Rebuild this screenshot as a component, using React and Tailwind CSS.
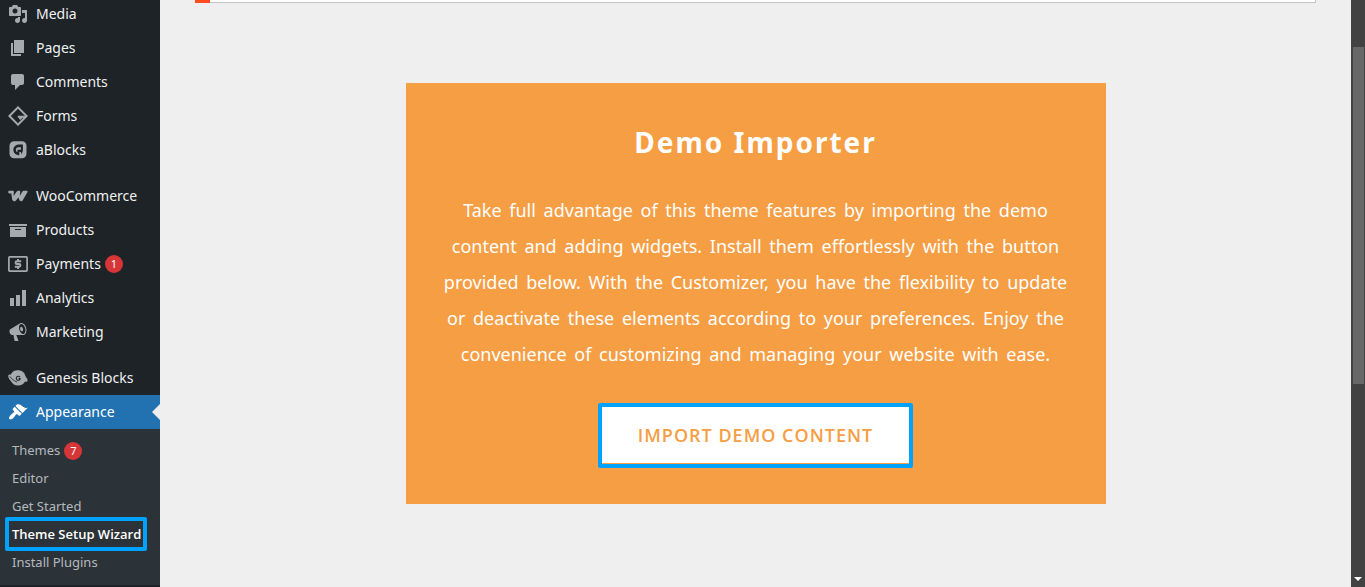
const icons = {
  media: (
    <path d="M13 11V4c0-.55-.45-1-1-1h-1.670L9 1H5L3.670 3H2c-.55 0-1 .45-1 1v7c0 .55.45 1 1 1h10c.55 0 1-.45 1-1zM7 4.500c1.380 0 2.500 1.120 2.500 2.500S8.380 9.500 7 9.500 4.500 8.380 4.500 7 5.620 4.500 7 4.500zM14 6h5v10.500c0 1.380-1.120 2.500-2.500 2.500S14 17.880 14 16.500s1.120-2.500 2.500-2.500c.17 0 .34.020.5.050V9h-3V6zm-4 8.050V13h2v3.500c0 1.380-1.120 2.500-2.500 2.500S7 17.880 7 16.500 8.120 14 9.500 14c.17 0 .34.020.5.050z" />
  ),
  pages: <path d="M6 15V2h10v13H6zm-1 1h8v2H3V5h2v11z" />,
  comments: <path d="M5 2h9c1.100 0 2 .9 2 2v7c0 1.100-.9 2-2 2h-2l-5 5v-5H5c-1.100 0-2-.9-2-2V4c0-1.100.9-2 2-2z" />,
  forms: (
    <>
      <path fill="none" stroke="currentColor" strokeWidth="2" d="M10 1.400l8.600 8.600-8.600 8.600L1.400 10z" />
      <path d="M9.800 9.700h8v2h-3.200l-2.300 2.300-1.500-1.500.8-.8H9.800z" />
    </>
  ),
  ablocks: (
    <>
      <path d="M6 1.200h8a4.500 4.500 0 0 1 4.500 4.500v8.100a4.500 4.500 0 0 1-4.500 4.500H6a4.500 4.500 0 0 1-4.500-4.500V5.700A4.500 4.500 0 0 1 6 1.200z" />
      <path
        className="text-[#1d2327]"
        fill="currentColor"
        fillRule="evenodd"
        d="M10 4.600h4.900v5.600a5 5 0 0 1-1.900 4v-2.300h-1.700v3.300A5.300 5.300 0 1 1 10 4.600zM10.300 7.300a2.600 2.600 0 0 0-.9 5V9.700h3.500V7.300z"
      />
    </>
  ),
  woo: (
    <path d="M1.600 4.800h3.200c.8 0 1.200.5 1.100 1.300L5.500 10l3.300-4.500c.4-.5.800-.7 1.400-.7h1.100c.7 0 1 .4.900 1.100L11.700 10l2.500-4.300c.4-.6.900-.9 1.600-.9h2.700c1 0 1.400.7.900 1.500l-4.500 7.700c-.4.800-1 1.200-1.700 1.200-1 0-1.600-.7-2-1.700l-.9-1.900-1.900 2.300c-.7.900-1.200 1.300-2.100 1.300-1.300 0-2-.8-2.200-2.100L3.300 7.400H1.600C.7 7.400.2 6.900.2 6.100s.5-1.300 1.400-1.300z" />
  ),
  products: <path d="M19 4v2H1V4h18zM2 7h16v10H2V7zm11 3V9H7v1h6z" />,
  payments: (
    <g fill="none" stroke="currentColor">
      <rect x="0.900" y="2.900" width="18.200" height="14.200" rx="0.800" strokeWidth="1.700" />
      <path strokeWidth="1.900" d="M13.200 7.300H8.900a1.350 1.350 0 0 0 0 2.700h2.200a1.350 1.350 0 0 1 0 2.700H6.800M10 4.900v2.400M10 12.700v2.400" />
    </g>
  ),
  analytics: <path d="M18 18V2h-4v16h4zm-6 0V7H8v11h4zm-6 0v-8H2v8h4z" />,
  marketing: (
    <path d="M18.150 5.940c.46 1.620.38 3.220-.02 4.480-.42 1.280-1.260 2.180-2.300 2.480-.16.060-.26.060-.4.060-.06.020-.12.020-.18.020-.06.020-.14.020-.22.020h-6.800l2.220 5.500c.02.140-.06.260-.14.340-.08.100-.24.160-.34.160H6.950c-.1 0-.26-.06-.34-.16-.08-.08-.16-.2-.14-.34l-1-5.500H4.250l-.02-.02c-.5.060-1.080-.18-1.540-.62s-.88-1.080-1.060-1.880c-.24-.8-.2-1.560-.02-2.200.18-.62.580-1.080 1.060-1.300l.02-.02 9-5.400c.1-.06.18-.1.240-.16.060-.04.140-.08.240-.12.160-.08.280-.12.5-.18 1.040-.3 2.240.1 3.220.98s1.840 2.240 2.260 3.860zm-2.580 5.980h-.02c.4-.1.740-.34 1.040-.7.580-.7.860-1.760.86-3.040 0-.64-.1-1.300-.28-1.980-.34-1.360-1.020-2.500-1.780-3.240s-1.680-1.100-2.460-.88c-.82.220-1.400.96-1.700 2-.32 1.040-.28 2.360.06 3.720.38 1.360 1 2.500 1.800 3.240.78.740 1.620 1.100 2.480.88zm-2.540-7.080c.22-.04.420-.02.620.040.38.160.76.480 1.020 1s.42 1.200.42 1.780c0 .3-.04.560-.12.800-.18.480-.44.840-.86.940-.34.100-.8-.06-1.140-.4s-.64-.86-.78-1.500c-.18-.62-.12-1.240.02-1.720s.48-.84.820-.94z" />
  ),
  genesis: (
    <>
      <path d="M2.700 6.700A7.900 7.900 0 0 1 17.500 8.300c1.500 1.900 2.500 4 1.900 5-.3.500-1.200.5-2.300.2A8 8 0 0 1 3 13.300C1.100 11.400-.2 8.700.3 7.400c.3-.8 1.200-.9 2.400-.7z" />
      <g className="text-[#1d2327]" fill="none" stroke="currentColor">
        <path strokeWidth="0.800" d="M1.800 8.400c1.800 2.600 4.300 4.600 7.400 5.700" />
        <path strokeWidth="1.100" d="M11.900 9.100a2 2 0 1 0 .2 2v-.5h-1.500" />
      </g>
    </>
  ),
  appearance: (
    <path d="M14.480 11.060L7.410 3.990l1.500-1.500c.5-.56 2.300-.47 3.510.320 1.210.800 1.430 1.280 2.910 2.100 1.180.640 2.450 1.260 4.450.850zm-.71.710L6.700 4.700 4.930 6.470c-.39.390-.39 1.020 0 1.410l1.060 1.060c.39.390.39 1.030 0 1.420-.6.600-1.430 1.110-2.210 1.690-.35.260-.7.530-1.010.840C1.430 14.230.4 16.080 1.400 17.070c.99 1 2.840-.03 4.180-1.360.31-.31.580-.66.850-1.020.57-.78 1.080-1.610 1.690-2.210.39-.39 1.020-.39 1.410 0l1.060 1.060c.39.390 1.020.390 1.410 0z" />
  ),
};

const menuGroups = [
  [
    { label: "Media", icon: "media" },
    { label: "Pages", icon: "pages" },
    { label: "Comments", icon: "comments" },
    { label: "Forms", icon: "forms" },
    { label: "aBlocks", icon: "ablocks" },
  ],
  [
    { label: "WooCommerce", icon: "woo" },
    { label: "Products", icon: "products" },
    { label: "Payments", icon: "payments", count: 1 },
    { label: "Analytics", icon: "analytics" },
    { label: "Marketing", icon: "marketing" },
  ],
  [
    { label: "Genesis Blocks", icon: "genesis" },
    { label: "Appearance", icon: "appearance", active: true },
  ],
];

const submenu = [
  { label: "Themes", count: 7 },
  { label: "Editor" },
  { label: "Get Started" },
  { label: "Theme Setup Wizard", current: true },
  { label: "Install Plugins" },
];

function Badge({ count }) {
  return (
    <span className="ml-1 flex size-[18px] items-center justify-center rounded-full bg-[#d63638] text-[11px] text-white">
      {count}
    </span>
  );
}

function MenuItem({ item }) {
  return (
    <li>
      <a
        href="#"
        className={
          item.active
            ? "relative flex h-[34px] items-center bg-[#2271b1] pl-2 text-sm text-white"
            : "flex h-[34px] items-center pl-2 text-sm text-[#f0f0f1]"
        }
      >
        <svg
          viewBox="0 0 20 20"
          fill="currentColor"
          aria-hidden="true"
          className={item.active ? "mr-2 size-5 text-white" : "mr-2 size-5 text-[#a7aaad]"}
        >
          {icons[item.icon]}
        </svg>
        {item.label}
        {item.count && <Badge count={item.count} />}
        {item.active && (
          <span className="absolute top-1/2 right-0 -translate-y-1/2 border-8 border-transparent border-r-[#efefef]" />
        )}
      </a>
    </li>
  );
}

function Sidebar() {
  return (
    <nav className="w-40 shrink-0 overflow-hidden bg-[#1d2327]">
      <div className="-mt-[3px] flex flex-col gap-3">
        {menuGroups.map((group, i) => (
          <ul key={i}>
            {group.map((item) => (
              <MenuItem key={item.label} item={item} />
            ))}
          </ul>
        ))}
      </div>
      <ul className="bg-[#2c3338] py-2 text-[13px] text-[#b4b9be]">
        {submenu.map((item) => (
          <li key={item.label} className="relative">
            <a
              href="#"
              className={
                item.current
                  ? "flex h-7 items-center pl-3 font-['Open_Sans',sans-serif] font-semibold whitespace-nowrap text-white"
                  : "flex h-7 items-center pl-3"
              }
            >
              {item.label}
              {item.count && <Badge count={item.count} />}
            </a>
            {item.current && (
              <span className="pointer-events-none absolute -top-1 right-[13px] -bottom-0.5 left-[5px] rounded-xs border-4 border-[#00a2ff]" />
            )}
          </li>
        ))}
      </ul>
    </nav>
  );
}

function Scrollbar() {
  return (
    <div className="flex w-[14px] shrink-0 flex-col items-center bg-[#424242] pt-[47px] pb-[6px]">
      <div className="h-[337px] w-[11px] bg-[#686868]" />
      <div className="mt-auto border-x-4 border-t-4 border-transparent border-t-white" />
    </div>
  );
}

export default function App() {
  return (
    <div className="flex h-screen overflow-hidden bg-[#efefef] font-['Noto_Sans',sans-serif]">
      <Sidebar />
      <main className="flex-1 px-[35px]">
        <div className="h-[3px] border-r border-b border-[#c3c4c7] bg-white">
          <div className="h-[3px] w-[15px] bg-[#ff4b1f]" />
        </div>
        <section className="mx-auto mt-20 max-w-[700px] bg-[#f69e44] px-[30px] pt-[39px] pb-9 text-center text-white">
          <h1 className="text-[28px] leading-10 font-bold tracking-[2px]">Demo Importer</h1>
          <p className="mt-[30px] text-lg leading-9 [word-spacing:3px]">
            Take full advantage of this theme features by importing the demo content and adding widgets. Install them
            effortlessly with the button provided below. With the Customizer, you have the flexibility to update or
            deactivate these elements according to your preferences. Enjoy the convenience of customizing and managing
            your website with ease.
          </p>
          <div className="mt-[31px] inline-flex rounded-xs border-4 border-[#00a2ff] pb-px align-top">
            <button
              type="button"
              className="h-14 bg-white px-9 font-['Open_Sans',sans-serif] text-lg font-semibold tracking-[1px] text-[#f69e44]"
            >
              IMPORT DEMO CONTENT
            </button>
          </div>
        </section>
      </main>
      <Scrollbar />
    </div>
  );
}
